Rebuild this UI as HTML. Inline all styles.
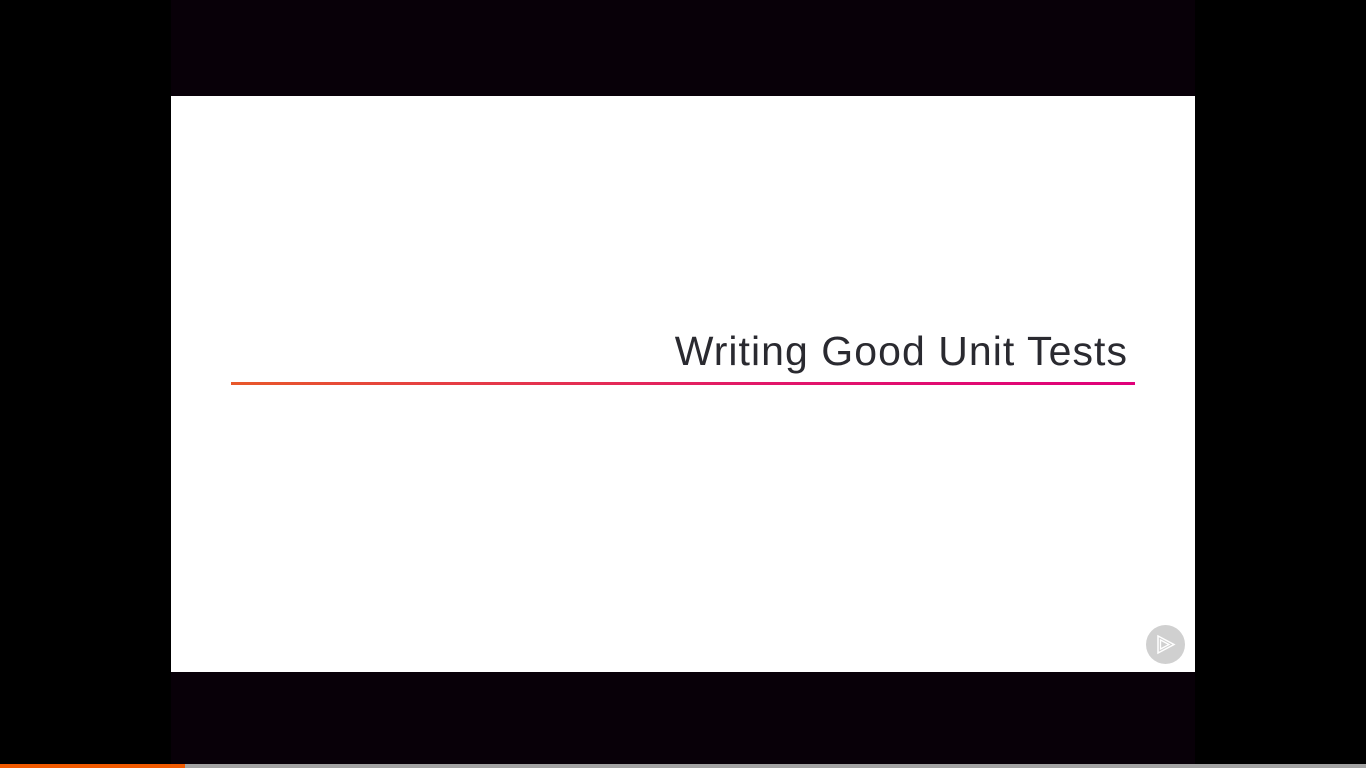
<!DOCTYPE html>
<html><head><style>
html,body{margin:0;padding:0;width:1366px;height:768px;background:#000;overflow:hidden;position:relative;font-family:"Liberation Sans",sans-serif}
.stage{position:absolute;left:171px;top:0;width:1024px;height:764px;background:#080008}
.slide{position:absolute;left:171px;top:96px;width:1024px;height:576px;background:#fff}
.title{position:absolute;right:238px;top:328px;font-size:41px;color:#2a2a30;white-space:nowrap;letter-spacing:1.05px;line-height:46px}
.line{position:absolute;left:231px;top:382px;width:904px;height:3px;background:linear-gradient(90deg,#e8582a,#e2166a 60%,#e0007a)}
.prog{position:absolute;left:0;top:764px;width:1366px;height:4px;background:#a3a3a3}
.prog i{position:absolute;left:0;top:0;width:185px;height:4px;background:#f15a00}
.logo{position:absolute;left:1146px;top:625px;width:39px;height:39px;border-radius:50%;background:#d0d0d0}
</style></head><body>
<div class="stage"></div>
<div class="slide"></div>
<div class="title">Writing Good Unit Tests</div>
<div class="line"></div>
<div class="logo"><svg width="39" height="39" viewBox="0 0 39 39"><path d="M12 11 L12 28 L28 19.5 Z" fill="none" stroke="#fff" stroke-width="1.5"/><path d="M14.5 15 L14.5 24 L23 19.5 Z" fill="none" stroke="#fff" stroke-width="1.3"/></svg></div>
<div class="prog"><i></i></div>
</body></html>
